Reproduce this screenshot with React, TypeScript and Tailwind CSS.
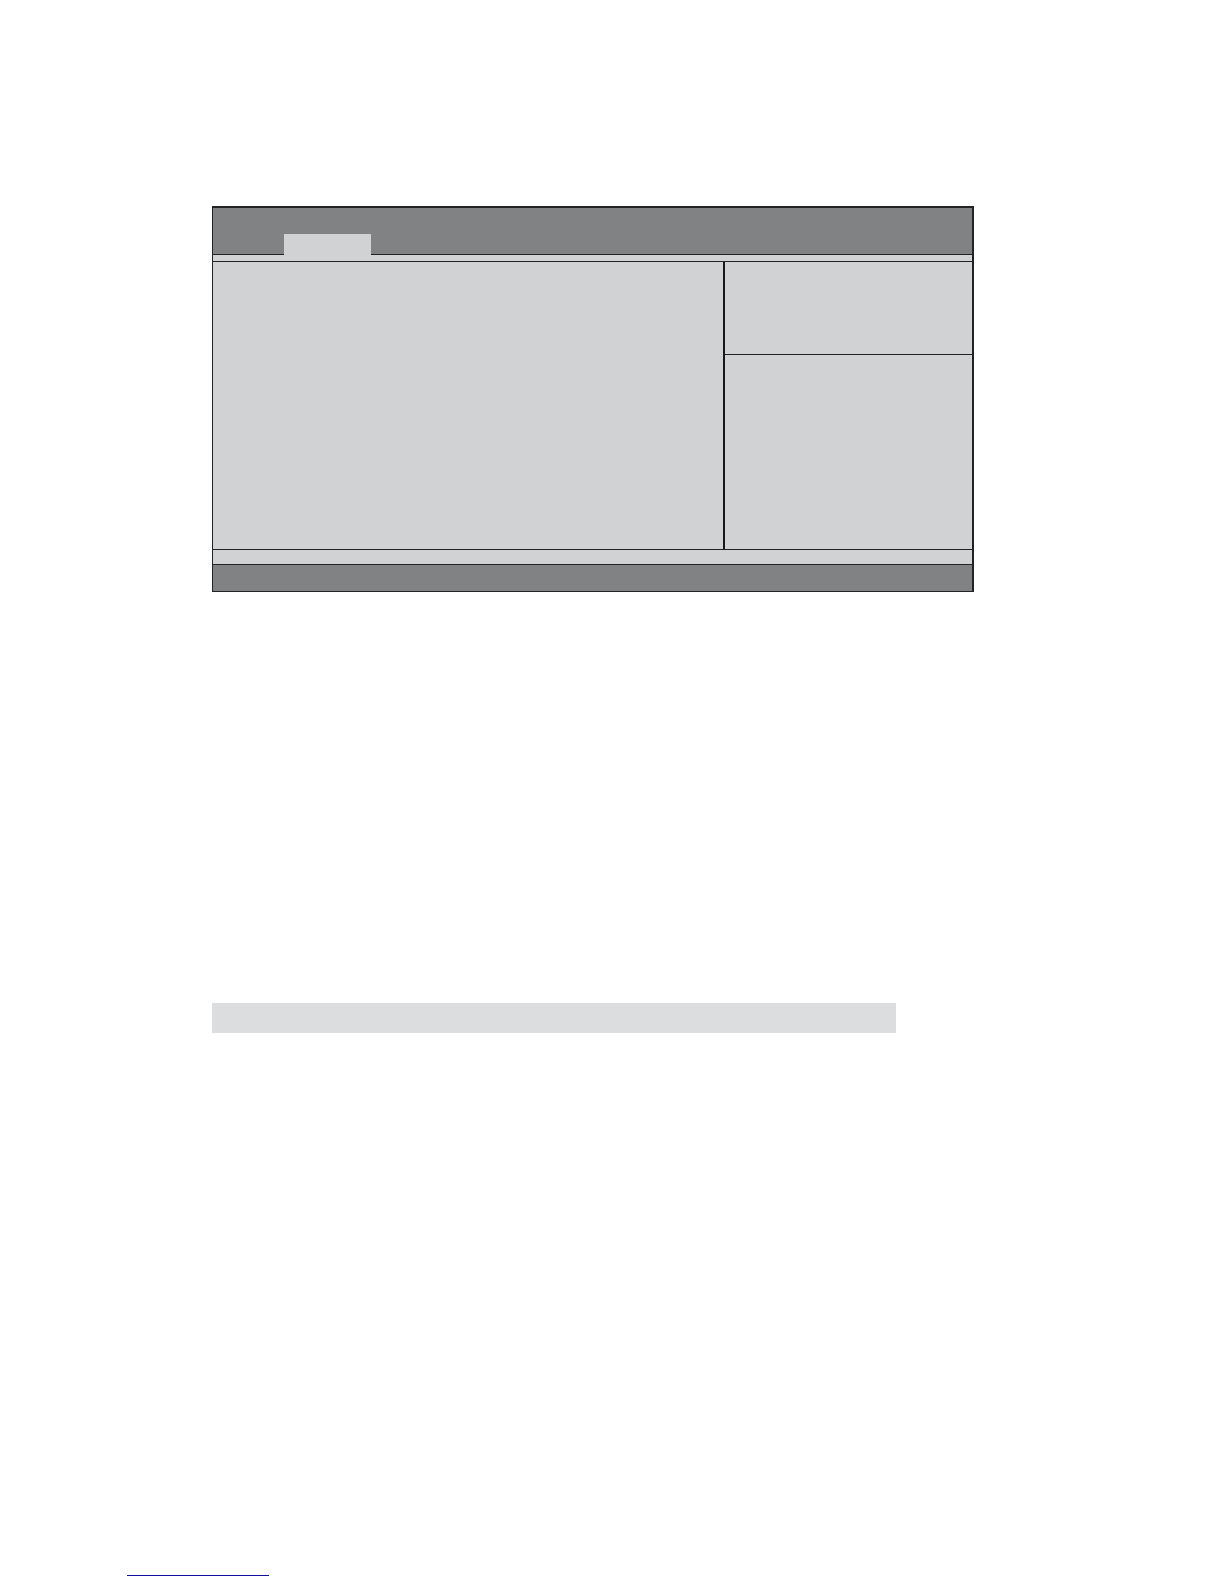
import React, { FC } from "react";

const MenuBar: FC = () => {
  return (
    <nav className="flex h-[47px] items-end border-b border-[#232325] bg-[#818283] pl-[71px]">
      {/* The open tab runs over the line below the bar */}
      <button type="button" className="-mb-px h-[21px] w-[87px] bg-[#d1d2d4]" />
    </nav>
  );
};

const SetupScreen: FC = () => {
  return (
    <section className="flex flex-col border-t-2 border-r-2 border-b border-l border-[#232325] bg-[#d1d2d4]">
      <MenuBar />
      <div className="h-[7px] border-b border-[#232325]" />

      <div className="flex h-72 border-b border-[#232325]">
        <main className="flex-1" />
        <aside className="flex w-[249px] flex-col border-l-2 border-[#19191b]">
          <div className="h-[93px] border-b border-[#232325]" />
          <div className="flex-1" />
        </aside>
      </div>

      <div className="h-[15px] border-b border-[#232325]" />
      <footer className="h-[26px] bg-[#818283]" />
    </section>
  );
};

const App: FC = () => {
  return (
    <div className="flex min-h-screen flex-col bg-white">
      <div className="flex flex-1 flex-col pt-[206px] pr-[250px] pl-[212px]">
        <SetupScreen />
        <div className="mt-[411px] mr-[78px] h-[30px] bg-[#dcddde]" />
      </div>

      {/* Rule at the foot of the page */}
      <div className="pb-2 pl-[127px]">
        <div className="h-px w-[142px] bg-[#12109a]" />
      </div>
    </div>
  );
};

export default App;
